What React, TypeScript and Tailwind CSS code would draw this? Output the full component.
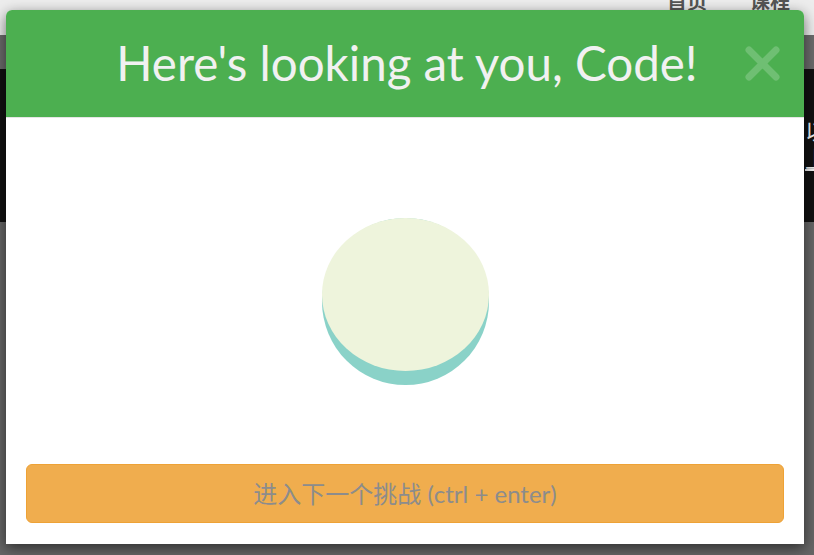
export default function App() {
  return (
    <div className="relative w-[814px] h-[555px] overflow-hidden bg-[#666666] font-['Lato','Noto_Sans_CJK_SC',sans-serif]">
      {/* page behind the modal */}
      <div className="h-[35px] bg-[#ededed] flex justify-end gap-[43px] pr-[24px] overflow-hidden">
        <span className="-mt-[14px] text-[20px] font-bold text-[#555]">首页</span>
        <span className="-mt-[14px] text-[20px] font-bold text-[#555]">课程</span>
      </div>
      <div className="h-[34px] bg-[#6b6b6b]" />
      <div className="h-[153px] bg-[#111111] flex justify-end overflow-hidden">
        <div className="w-[9px] pt-[48px] text-[22px] leading-[28px] text-[#eee] whitespace-nowrap">
          <div>以</div>
          <div className="underline">上</div>
        </div>
      </div>

      {/* modal */}
      <div className="absolute left-[6px] top-[10px] w-[798px] h-[534px] bg-white rounded-t-[6px] shadow-[0_4px_14px_rgba(0,0,0,0.55)] flex flex-col">
        <div className="relative h-[108px] shrink-0 bg-[#4caf50] rounded-t-[6px] border-b border-[#e5e5e5] flex items-center justify-center">
          <h1 className="text-[47.5px] font-normal text-[#f1f1f1] leading-none -mt-[2px] pl-[4px]">Here's looking at you, Code!</h1>
          <svg className="absolute left-[739px] top-[36px] w-[35px] h-[35px]" viewBox="0 0 35 35">
            <path d="M4 4 L31 31 M31 4 L4 31" stroke="rgba(255,255,255,0.2)" strokeWidth="7" strokeLinecap="round" fill="none" />
          </svg>
        </div>
        <div className="flex-1 flex items-start justify-center pt-[100px]">
          <div className="relative w-[167px] h-[167px] rounded-full bg-[#8ad2c8]">
            <div className="w-[167px] h-[153px] rounded-[50%] bg-[#eef4dc]" />
          </div>
        </div>
        <div className="px-[20px] pb-[21px]">
          <button className="w-full h-[59px] rounded-[6px] bg-[#f0ad4e] border border-[#eea236] text-[24px] text-[#8c8c8c]">
            进入下一个挑战 (ctrl + enter)
          </button>
        </div>
      </div>
    </div>
  );
}
